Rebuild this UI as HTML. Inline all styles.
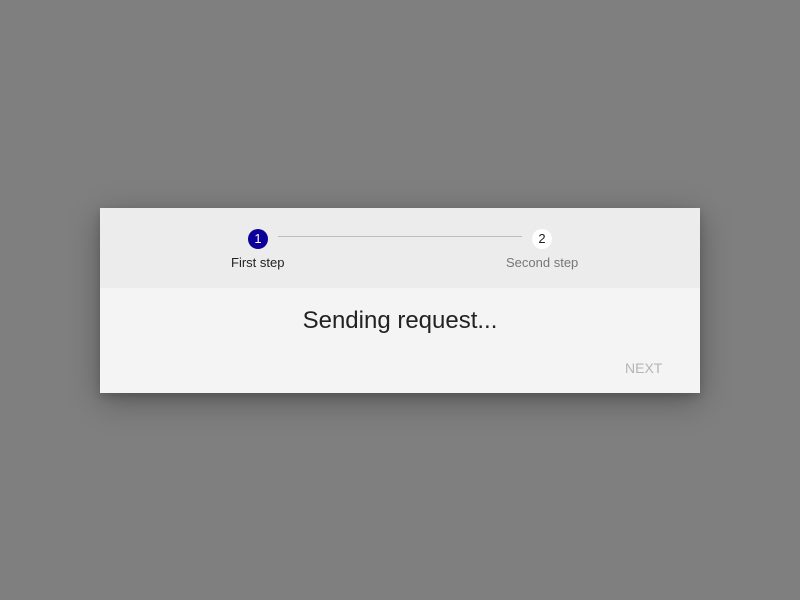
<!DOCTYPE html>
<html><head><style>
body{margin:0;width:800px;height:600px;background:#7f7f7f;font-family:"Liberation Sans",sans-serif;position:relative;overflow:hidden}
.d{position:absolute;left:100px;top:208px;width:600px;height:185px;background:#f4f4f4;box-shadow:0 8px 30px rgba(0,0,0,.3),0 4px 8px rgba(0,0,0,.15)}
.h{position:absolute;left:0;top:0;width:600px;height:80px;background:#ececec}
.c{position:absolute;width:20px;height:20px;border-radius:50%;font-size:13px;line-height:20px;text-align:center}
.l{position:absolute;font-size:13px;top:47px}
.line{position:absolute;left:178px;top:28px;width:244px;height:1px;background:#bdbdbd}
</style></head><body>
<div class="d">
<div class="h">
<div class="c" style="left:148px;top:21px;background:#0d0099;color:#fff">1</div>
<div class="line"></div>
<div class="c" style="left:432px;top:21px;background:#fff;color:#222">2</div>
<div class="l" style="left:131px;color:#222">First step</div>
<div class="l" style="left:406px;color:#777">Second step</div>
</div>
<div style="position:absolute;top:99px;width:600px;text-align:center;font-size:24px;color:#222">Sending request...</div>
<div style="position:absolute;left:525px;top:152px;font-size:14px;color:#b5b5b5">NEXT</div>
</div>
</body></html>
